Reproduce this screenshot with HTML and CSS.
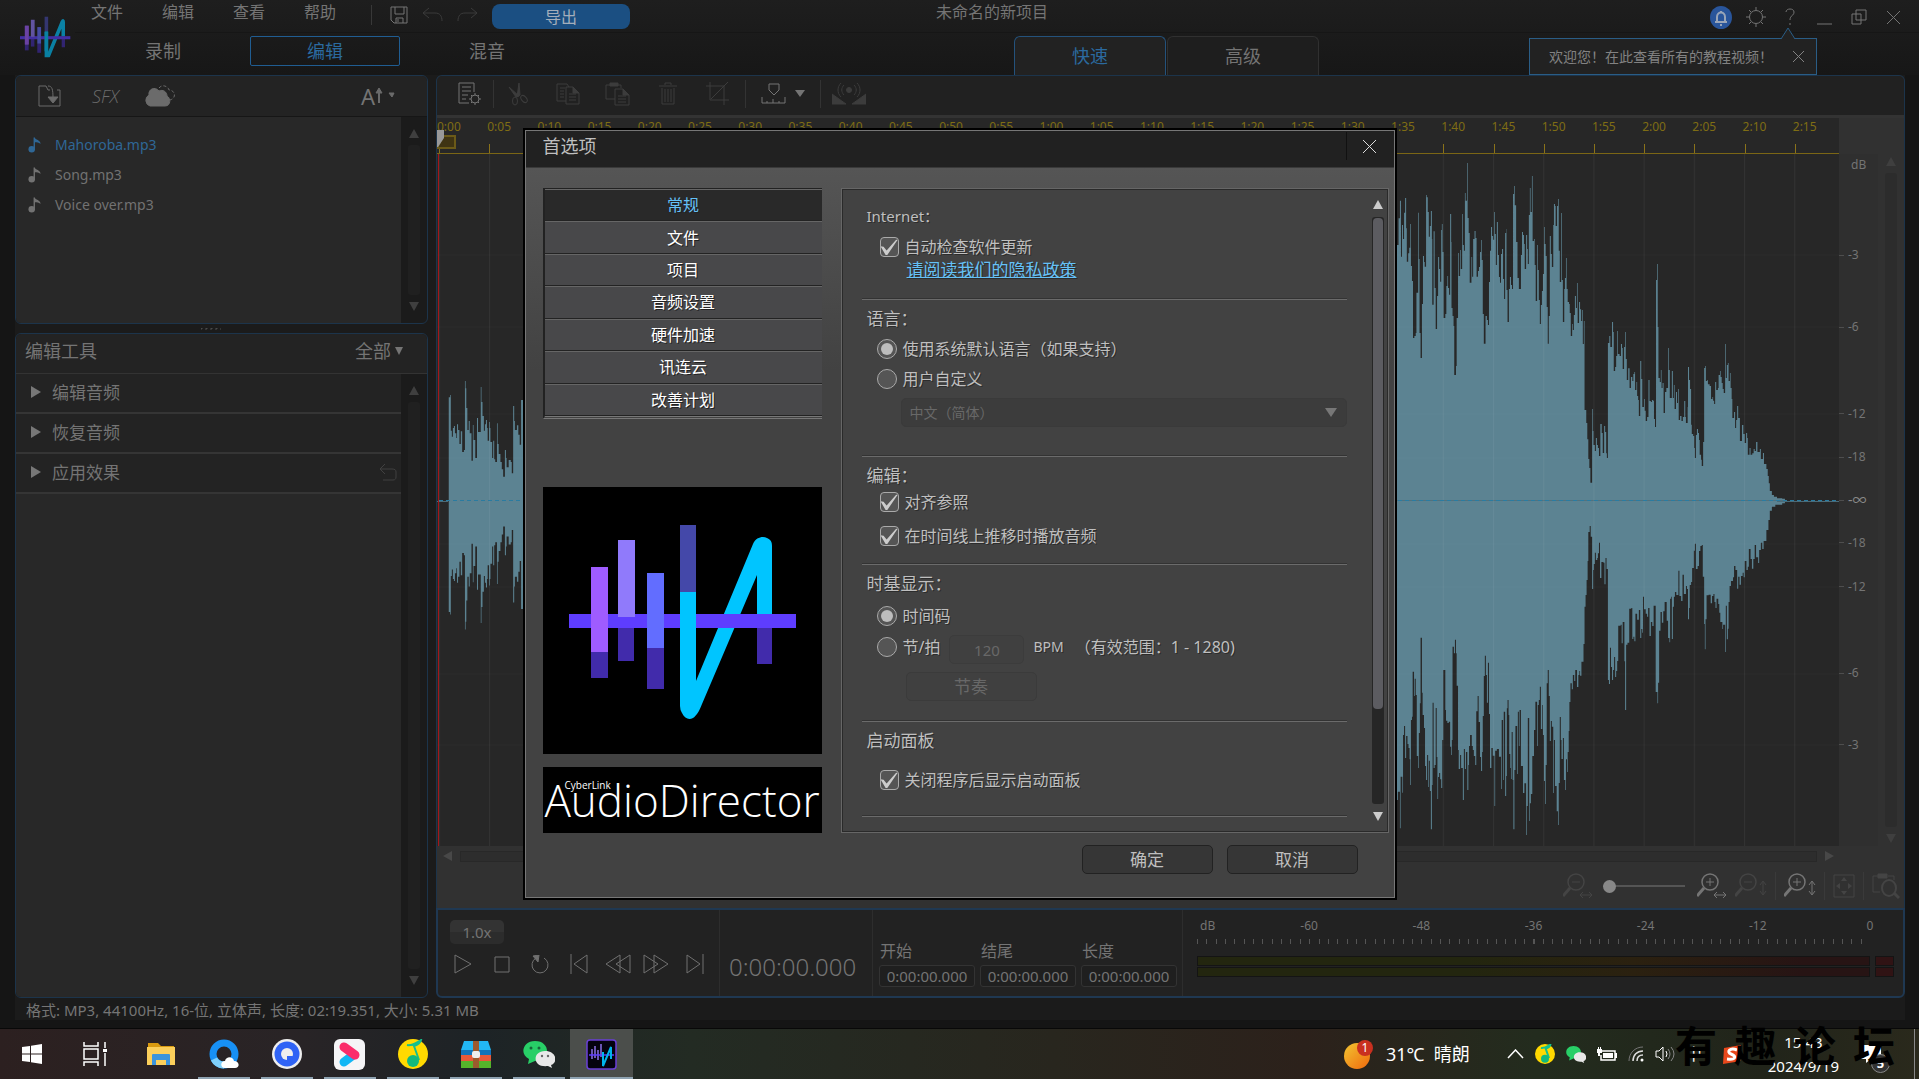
FILE: index.html
```html
<!DOCTYPE html>
<html lang="zh-CN">
<head>
<meta charset="utf-8">
<title>AudioDirector</title>
<link rel="stylesheet" href="styles.css">
</head>
<body>
<svg width="0" height="0" class="defs" aria-hidden="true">
  <symbol id="brand" viewBox="0 0 230 184">
    <rect x="22" y="42" width="17" height="85" fill="#9f5cff"/><rect x="22" y="127" width="17" height="26" fill="#412bab"/>
    <rect x="49" y="102" width="16" height="34" fill="#412bab"/>
    <rect x="78" y="123" width="17" height="41" fill="#412bab"/>
    <rect x="188" y="102" width="15" height="37" fill="#412bab"/>
    <rect x="111" y="0" width="16" height="68" fill="#4448a9"/>
    <path d="M119 70V185C119 190 123 188 126 183L191 24C194 18 195 18 195 26V90" fill="none" stroke="#00c5ff" stroke-width="16" stroke-linejoin="round"/>
    <rect x="0" y="89" width="227" height="14" fill="#5e3dff"/>
    <rect x="22" y="42" width="17" height="85" fill="#9f5cff"/>
    <rect x="49" y="15" width="17" height="77" fill="#907afb"/>
    <rect x="78" y="48" width="17" height="75" fill="#626dff"/>
    <rect x="111" y="67" width="16" height="90" fill="#00c5ff"/>
  </symbol>
  <symbol id="note" viewBox="0 0 14 16"><circle cx="4" cy="12.500" r="3.500"/><path d="M6 0h1.500c0 3 6 2 6 7-2-2-4-2-6-2v8H6z"/></symbol>
  <symbol id="zoomer" viewBox="0 0 22 26"><circle cx="13" cy="9" r="8" fill="none" stroke="currentColor" stroke-width="1.500"/><path d="M7 15 0 23" stroke="currentColor" stroke-width="3"/></symbol>
</svg>

<div class="app">
  <header class="header">
    <svg class="mini-brand" viewBox="0 0 230 190"><use href="#brand" width="230" height="184"/></svg>
    <div class="titlebar">
      <nav class="menu">
        <a href="#">文件</a><a href="#">编辑</a><a href="#">查看</a><a href="#">帮助</a>
      </nav>
      <div class="quick">
        <button aria-label="保存"><svg width="18" height="18" viewBox="0 0 18 18"><path d="M1 1h16v16H4l-3-3zM5 1v7h9V1M6 17v-5h7v5M8 13v3" /></svg></button>
        <button aria-label="撤销" class="off"><svg width="21" height="16" viewBox="0 0 21 16"><path d="M7 1 1 6l6 5M1 6h12c5 0 7 3 7 8"/></svg></button>
        <button aria-label="重做" class="off"><svg width="21" height="16" viewBox="0 0 21 16"><path d="m14 1 6 5-6 5M20 6H8C3 6 1 9 1 14"/></svg></button>
      </div>
      <button class="export">导出</button>
      <h1 class="project">未命名的新项目</h1>
      <div class="window-tools">
        <button aria-label="通知" class="bell"><svg width="22" height="23" viewBox="0 0 22 23"><ellipse cx="11" cy="11.500" rx="11" ry="11.500" fill="#29559b" stroke="none"/><path d="M5 16h12M7 16v-5c0-6 8-6 8 0v5M11 5v2M10 19h2" stroke="#99a5b8" stroke-width="2"/></svg></button>
        <button aria-label="设置"><svg width="20" height="20" viewBox="0 0 20 20"><circle cx="10" cy="10" r="6.500"/><path d="M10 0v3M10 17v3M0 10h3M17 10h3M3 3l2 2M15 15l2 2M3 17l2-2M15 5l2-2"/></svg></button>
        <button aria-label="帮助"><svg width="10" height="18" viewBox="0 0 10 18"><path d="M1 4c0-4 8-4 8 0 0 4-4 3-4 8M5 15v2"/></svg></button>
        <button aria-label="最小化"><svg width="15" height="18" viewBox="0 0 15 18"><path d="M0 16h15"/></svg></button>
        <button aria-label="还原"><svg width="16" height="16" viewBox="0 0 16 16"><path d="M1 5h9v10H1zM5 5V1h10v10h-5M5 5v6h5"/></svg></button>
        <button aria-label="关闭"><svg width="15" height="15" viewBox="0 0 15 15"><path d="m1 1 13 13M14 1 1 14"/></svg></button>
      </div>
    </div>
    <div class="modes">
      <button>录制</button><button class="on">编辑</button><button>混音</button>
      <div class="views"><button class="on">快速</button><button>高级</button></div>
      <aside class="tip">
        <svg class="tip-point" width="14" height="12" viewBox="0 0 14 12"><path d="M0 12 7 1l7 11"/></svg>
        欢迎您！在此查看所有的教程视频！
        <button aria-label="关闭提示"><svg width="11" height="11" viewBox="0 0 11 11"><path d="m0 0 11 11M11 0 0 11"/></svg></button>
      </aside>
    </div>
  </header>

  <main class="workspace">
    <div class="side">
      <section class="panel files">
        <div class="panel-head tools">
          <button aria-label="导入"><svg width="23" height="24" viewBox="0 0 23 24"><path d="M12 6h-2L8 2H1v20h21V6h-3M10 2c4 0 5 3 5 12"/><path d="m10 13 5 6 5-6z" fill="currentColor"/></svg></button>
          <button class="sfx">SFX</button>
          <button aria-label="云"><svg width="33" height="22" viewBox="0 0 33 22"><path d="M6 21a6 6 0 0 1-1-11C4 4 11 1 15 6c4-2 8 1 8 5 4 2 4 10-2 10z" fill="currentColor"/><path d="M15 3c3-4 9-2 10 2 6 0 8 8 1 10" stroke-dasharray="3 2"/></svg></button>
          <button class="sorter" aria-label="排序">A<svg width="22" height="18" viewBox="0 0 22 18"><path d="M4 16V4" stroke-width="2"/><path d="m1 6 3-5 3 5zM14 6h5l-2 4z" fill="currentColor"/></svg></button>
        </div>
        <div class="panel-body">
          <ul class="file-list">
            <li class="on"><svg><use href="#note"/></svg>Mahoroba.mp3</li>
            <li><svg><use href="#note"/></svg>Song.mp3</li>
            <li><svg><use href="#note"/></svg>Voice over.mp3</li>
          </ul>
          <div class="scroll"><i class="up"></i><i class="track"></i><i class="down"></i></div>
        </div>
      </section>
      <div class="grip"></div>
      <section class="panel toolset">
        <div class="panel-head"><h2>编辑工具</h2><button class="filter">全部<i class="down"></i></button></div>
        <div class="panel-body">
          <div class="groups">
            <button><i class="right"></i>编辑音频</button>
            <button><i class="right"></i>恢复音频</button>
            <button><i class="right"></i>应用效果<svg width="18" height="18" viewBox="0 0 18 18"><path d="M6 1 1 6l5 5M1 6h12c3 0 4 1 4 3v5c0 2-1 3-3 3H4"/></svg></button>
          </div>
          <div class="scroll"><i class="up"></i><i class="track"></i><i class="down"></i></div>
        </div>
      </section>
    </div>

    <div class="stage">
      <section class="editor">
        <div class="toolbar">
          <button aria-label="属性" class="lit"><svg width="24" height="24" viewBox="0 0 24 24"><path d="M11 21H1V1h15v9M4 5h9M4 9h9M4 13h6M4 17h4"/><circle cx="17" cy="17" r="4"/><path d="M17 11v2M17 21v2M11 17h2M21 17h2M13 13l1 1M20 20l1 1M13 21l1-1M20 14l1-1"/></svg></button>
          <i class="sep"></i>
          <button aria-label="剪切"><svg width="20" height="24" viewBox="0 0 20 24"><path d="m1 5 10 9-3 1zM11 1l1 12-3 2z" fill="currentColor"/><ellipse cx="7" cy="19" rx="2.500" ry="4"/><ellipse cx="16" cy="17" rx="2.500" ry="4" transform="rotate(-40 16 17)"/></svg></button>
          <button aria-label="复制"><svg width="24" height="24" viewBox="0 0 24 24"><path d="M10 19H1V2h10l2 3M4 6h5M4 9h4M4 12h4M4 15h4M10 5h7l6 6v11H10zM13 12h7M13 15h7M13 18h7"/><path d="M17 5v6h6z" fill="currentColor"/></svg></button>
          <button aria-label="粘贴"><svg width="25" height="24" viewBox="0 0 25 24"><path d="M10 17H1V3h15v3M10 7h8l6 6v10H10zM13 14h8M13 17h8M13 20h8"/><path d="M5 1h8v3H5zM18 7v6h6z" fill="currentColor"/></svg></button>
          <button aria-label="删除"><svg width="18" height="23" viewBox="0 0 18 23"><path d="M0 4h18M6 3V1h6v2M3 6v16h12V6M6 7v13M9 7v13M12 7v13"/></svg></button>
          <button aria-label="裁剪"><svg width="23" height="23" viewBox="0 0 23 23"><path d="M4 0v18h19M0 4h18v19M22 0 5 17"/></svg></button>
          <i class="sep"></i>
          <button aria-label="标记" class="lit marker"><svg width="25" height="22" viewBox="0 0 25 22"><path d="M8 1h10v6l-5 5-5-5zM1 14v6h23v-6M6 18v2M12 16v4M18 18v2"/></svg><i class="down"></i></button>
          <i class="sep"></i>
          <button aria-label="广播"><svg width="34" height="22" viewBox="0 0 34 22"><path d="M0 11v10h14zM34 11v10H20z" fill="currentColor"/><circle cx="17" cy="7" r="2.500" fill="currentColor"/><path d="M12 2c-3 3-3 7 0 10M22 2c3 3 3 7 0 10M9 0c-4 4-4 10 0 14M25 0c4 4 4 10 0 14"/></svg></button>
        </div>
        <div class="timeline">
          <div class="plot">
            <ol class="ruler"></ol>
            <svg class="wave" viewBox="0 0 1402 692" preserveAspectRatio="none">
              <defs><pattern id="cols" x="52" width="50.200" height="692" patternUnits="userSpaceOnUse"><path d="M0 0V692" stroke="#fff" stroke-opacity=".05" stroke-width="2"/></pattern></defs>
              <g fill="#5c8392">
                <path id="lead-top" transform="translate(-437 156) scale(.3444 .3333)"/>
                <path id="lead-bottom" transform="translate(-437 552) scale(.3444 -.3590)"/>
                <path id="tail-top" transform="translate(943 -44) scale(.34375 .3333)"/>
                <path id="tail-bottom" transform="translate(943 336) scale(.34375 .3333)"/>
              </g>
              <rect width="1402" height="692" fill="url(#cols)"/>
              <path d="M0 101H1402M0 173H1402M0 260H1402M0 304H1402M0 390H1402M0 433H1402M0 520H1402M0 591H1402" stroke="#fff" stroke-opacity=".025"/>
              <path d="M0 347.500H11M1340 347.500H1402" stroke="#4a6b78"/>
              <path d="M2 346.500H1402" stroke="#2a7ba0" stroke-dasharray="4 3"/>
              <path d="M1.500 0V692" stroke="#a3161b" stroke-width="1"/>
            </svg>
            <svg class="playhead" width="26" height="20" viewBox="0 0 26 20"><path d="M13 6h12v12H7z" fill="#3f3413" stroke="#6b5a18" stroke-width="2"/><path d="M0 0h14v8l-6 9H7L0 8z" fill="#999"/></svg>
          </div>
          <div class="levels">
            <span class="unit">dB</span>
            <span class="lv" style="top:14.6%">-3</span><span class="lv" style="top:25%">-6</span><span class="lv" style="top:37.5%">-12</span><span class="lv" style="top:43.8%">-18</span><span class="lv inf" style="top:50%">-∞</span><span class="lv" style="top:56.2%">-18</span><span class="lv" style="top:62.5%">-12</span><span class="lv" style="top:75%">-6</span><span class="lv" style="top:85.4%">-3</span>
          </div>
          <div class="scroll"><i class="up"></i><i class="track"></i><i class="down"></i></div>
        </div>
        <div class="hscroll"><i class="left"></i><i class="bar"></i><i class="right"></i></div>
        <div class="zooms">
          <button aria-label="水平缩小"><svg width="30" height="26" viewBox="0 0 30 26"><use href="#zoomer" width="22" height="26"/><path d="M9 9h8M17 22h12m-9-3-3 3 3 3m6-6 3 3-3 3"/></svg></button>
          <input type="range" min="0" max="100" value="0" aria-label="水平缩放">
          <button aria-label="水平放大" class="lit"><svg width="30" height="26" viewBox="0 0 30 26"><use href="#zoomer" width="22" height="26"/><path d="M9 9h8M13 5v8M17 22h12m-9-3-3 3 3 3m6-6 3 3-3 3"/></svg></button>
          <button aria-label="垂直缩小"><svg width="32" height="26" viewBox="0 0 32 26"><use href="#zoomer" width="22" height="26"/><path d="M9 9h8M28 9v12m-3-9 3-4 3 4m-6 6 3 4 3-4"/></svg></button>
          <i class="sep"></i>
          <button aria-label="垂直放大" class="lit"><svg width="32" height="26" viewBox="0 0 32 26"><use href="#zoomer" width="22" height="26"/><path d="M9 9h8M13 5v8M28 9v12m-3-9 3-4 3 4m-6 6 3 4 3-4"/></svg></button>
          <i class="sep"></i>
          <button aria-label="适合窗口"><svg width="22" height="24" viewBox="0 0 22 24"><path d="M1 1h20v22H1z"/><path d="m8 7 3-4 3 4zM8 17l3 4 3-4zM7 9l-4 3 4 3zM15 9l4 3-4 3z" fill="currentColor" stroke="none"/></svg></button>
          <i class="sep"></i>
          <button aria-label="查看选区"><svg width="28" height="26" viewBox="0 0 28 26"><path d="M8 19H1V3h5M16 3h6v4"/><path d="M6 1h9v4H6z" fill="currentColor"/><ellipse cx="17" cy="15" rx="7" ry="8" stroke-width="2"/><path d="m22 20 5 5" stroke-width="3"/></svg></button>
        </div>
      </section>

      <section class="player">
        <div class="transport">
          <button class="speed">1.0x</button>
          <div class="keys">
            <button aria-label="播放"><svg width="18" height="20" viewBox="0 0 18 20"><path d="M1 1v18l16-9z"/></svg></button>
            <button aria-label="停止"><svg width="16" height="17" viewBox="0 0 16 17"><path d="M1 1h14v15H1z"/></svg></button>
            <button aria-label="循环"><svg width="18" height="19" viewBox="0 0 18 19"><path d="M5 3a8 8 0 1 0 8 0"/><path d="m2 1 6-1-1 7z" fill="currentColor"/></svg></button>
            <button aria-label="到开头"><svg width="18" height="20" viewBox="0 0 18 20"><path d="M1 0v20M17 1v18L4 10z"/></svg></button>
            <button aria-label="快退"><svg width="26" height="20" viewBox="0 0 26 20"><path d="M15 1v18L1 10zM25 1v18l-14-9z"/></svg></button>
            <button aria-label="快进"><svg width="26" height="20" viewBox="0 0 26 20"><path d="M1 1v18l14-9zM11 1v18l14-9z"/></svg></button>
            <button aria-label="到结尾"><svg width="18" height="20" viewBox="0 0 18 20"><path d="M17 0v20M1 1v18l13-9z"/></svg></button>
          </div>
        </div>
        <output class="clock">0:00:00.000</output>
        <div class="range">
          <label>开始<input value="0:00:00.000"></label>
          <label>结尾<input value="0:00:00.000"></label>
          <label>长度<input value="0:00:00.000"></label>
        </div>
        <div class="meter">
          <div class="meter-scale"><span>dB</span><span>-60</span><span>-48</span><span>-36</span><span>-24</span><span>-12</span><span>0</span></div>
          <div class="meter-ticks"></div>
          <div class="meter-bars"><i></i><b></b><i></i><b></b></div>
        </div>
      </section>
    </div>
  </main>
  <footer class="status">格式: MP3, 44100Hz, 16-位, 立体声, 长度: 02:19.351, 大小: 5.31 MB</footer>

  <div class="overlay">
    <form class="dialog" role="dialog" aria-labelledby="dlg-title">
      <div class="dialog-title"><h2 id="dlg-title">首选项</h2><button type="button" aria-label="关闭"><svg width="15" height="15" viewBox="0 0 15 15"><path d="m1 1 13 13M14 1 1 14"/></svg></button></div>
      <div class="dialog-body">
        <div class="dialog-side">
          <nav class="pages">
            <button type="button" class="on">常规</button><button type="button">文件</button><button type="button">项目</button><button type="button">音频设置</button><button type="button">硬件加速</button><button type="button">讯连云</button><button type="button">改善计划</button>
          </nav>
          <div class="cover"><svg width="227" height="194" viewBox="0 0 227 194"><g><rect x="22" y="127" width="17" height="26" fill="#412bab"/><rect x="49" y="102" width="16" height="34" fill="#412bab"/><rect x="78" y="123" width="17" height="41" fill="#412bab"/><rect x="188" y="102" width="15" height="37" fill="#412bab"/><rect x="111" y="0" width="16" height="68" fill="#4448a9"/><path d="M111 67h16v89L184 19c3-7 10-8 14-6 4 2 5 4 5 8v69h-15V50L133 179c-3 8-6 12-9 14-4 2-8 1-11-5q-2-3-2-7z" fill="#00c5ff"/><path d="M0 89h227v14H0z" fill="#5e3dff"/><rect x="22" y="42" width="17" height="85" fill="#9f5cff"/><rect x="49" y="15" width="17" height="77" fill="#907afb"/><rect x="78" y="48" width="17" height="75" fill="#626dff"/><rect x="111" y="67" width="16" height="60" fill="#00c5ff"/></g></svg></div>
          <div class="product"><small>CyberLink</small><span>AudioDirector</span></div>
        </div>
        <div class="pane">
          <div class="pane-content">
            <section class="s-net">
              <h3>Internet：</h3>
              <label class="row"><input type="checkbox" checked>自动检查软件更新</label>
              <a href="#">请阅读我们的隐私政策</a>
            </section>
            <section class="s-lang">
              <h3>语言：</h3>
              <label class="row"><input type="radio" name="lang" checked>使用系统默认语言（如果支持）</label>
              <label class="row"><input type="radio" name="lang">用户自定义</label>
              <div class="drop"><select disabled aria-label="语言"><option>中文（简体）</option></select><i class="down"></i></div>
            </section>
            <section class="s-edit">
              <h3>编辑：</h3>
              <label class="row"><input type="checkbox" checked>对齐参照</label>
              <label class="row"><input type="checkbox" checked>在时间线上推移时播放音频</label>
            </section>
            <section class="s-time">
              <h3>时基显示：</h3>
              <label class="row"><input type="radio" name="base" checked>时间码</label>
              <div class="row beat"><label><input type="radio" name="base">节/拍</label><input class="bpm" value="120" disabled aria-label="BPM"><span class="unit">BPM</span><span>（有效范围：1 - 1280)</span></div>
              <button type="button" class="tempo" disabled>节奏</button>
            </section>
            <section class="s-start">
              <h3>启动面板</h3>
              <label class="row"><input type="checkbox" checked>关闭程序后显示启动面板</label>
            </section>
          </div>
          <div class="scroll"><i class="up"></i><i class="track"><b></b></i><i class="down"></i></div>
        </div>
      </div>
      <div class="dialog-foot"><button type="button">确定</button><button type="button">取消</button></div>
    </form>
  </div>
</div>

<footer class="taskbar">
  <button class="task start" aria-label="开始"><svg width="20" height="20" viewBox="0 0 20 20"><path d="m0 3 8-1v7.500H0zM9 1.800 20 0v9.500H9zM0 10.500h8V18l-8-1zM9 10.500h11V20L9 18.200z" fill="#fff"/></svg></button>
  <button class="task view" aria-label="任务视图"><svg width="24" height="24" viewBox="0 0 24 24" fill="none" stroke="#fff" stroke-width="1.500"><path d="M1 0v4h14V0M1 24v-4h14v4M1 7h14v10H1zM22 0v6M22 11v13"/><path d="M20 7h4v3h-4z" fill="#fff" stroke="none"/></svg></button>
  <button class="task" aria-label="文件资源管理器"><svg width="28" height="24" viewBox="0 0 28 24"><path d="M1 1h10l3 3h13v18H1z" fill="#d99a10"/><path d="M0 5h28v18H0z" fill="#fbcf5b"/><path d="M5 23V13q0-1 1-1h16q1 0 1 1v10h-4v-5H9v5z" fill="#3b94dc"/></svg></button>
  <button class="task open" aria-label="QQ浏览器"><svg width="30" height="30" viewBox="0 0 30 30"><circle cx="15" cy="15" r="11" fill="none" stroke="#1790f5" stroke-width="7"/><path d="M5 20a11 11 0 0 0 10 6" fill="none" stroke="#7fd0fb" stroke-width="7"/><path d="M16 29c-5 0-5-7 0-7 1-5 8-5 9 0 6 0 6 7 1 7z" fill="#fff"/></svg></button>
  <button class="task open" aria-label="夸克"><svg width="30" height="30" viewBox="0 0 30 30"><circle cx="15" cy="15" r="15" fill="#eee"/><circle cx="15" cy="15" r="12.500" fill="#2f63f5"/><circle cx="15" cy="15" r="6" fill="#eee"/><path d="M15 17h6l-1 4h-5z" fill="#2f63f5"/></svg></button>
  <button class="task open" aria-label="视频"><svg width="31" height="31" viewBox="0 0 31 31"><rect width="31" height="31" rx="6" fill="#f5f5f7"/><path d="m10 23 8-6" stroke="#12b7f5" stroke-width="9" stroke-linecap="round"/><path d="m10 8 11 8" stroke="#fb2d6b" stroke-width="9" stroke-linecap="round"/></svg></button>
  <button class="task open" aria-label="QQ音乐"><svg width="30" height="30" viewBox="0 0 30 30"><circle cx="15" cy="15" r="15" fill="#ffd900"/><path d="M9 6c5 1 9-2 14-5-1 4-4 5-7 6l5 14" fill="none" stroke="#14bf8d" stroke-width="2"/><path d="M9 6c5 1 9-2 14-5-1 4-4 5-7 6z" fill="#14bf8d"/><ellipse cx="15" cy="22" rx="6" ry="6" fill="#12b97c"/></svg></button>
  <button class="task open" aria-label="压缩"><svg width="30" height="27" viewBox="0 0 30 27"><path d="M3 0h24l3 9H0z" fill="#22b7f3"/><path d="M0 9h30v5H0z" fill="#1273b9"/><path d="M0 14h30v6H0z" fill="#e8593a"/><path d="M0 20h30v7H0z" fill="#55b42b"/><path d="M12 0h6v27h-6z" fill="#9b5a2d"/><rect x="11" y="10" width="8" height="7" rx="2" fill="#eee"/></svg></button>
  <button class="task open" aria-label="微信"><svg width="32" height="27" viewBox="0 0 32 27"><path d="M12 0c16 0 16 20 0 20l-7 3 1-5C-4 13 0 0 12 0z" fill="#28cf67"/><circle cx="8" cy="7" r="1.500" fill="#17663a"/><circle cx="16" cy="7" r="1.500" fill="#17663a"/><path d="M22 10c12 0 13 12 6 14l1 3-4-2c-16 2-16-15-3-15z" fill="#e8e8e8"/><circle cx="19" cy="15" r="1.200" fill="#666"/><circle cx="25" cy="15" r="1.200" fill="#666"/></svg></button>
  <button class="task open active" aria-label="AudioDirector"><svg width="31" height="31" viewBox="0 0 31 31"><rect x="1" y="1" width="29" height="29" rx="3" fill="#05030f" stroke="#6a3fd8" stroke-width="1.500"/><path d="M6 10v10M9 7v12M12 11v10M15 5v13" stroke="#8b70e8" stroke-width="1.500"/><path d="M3 16h25" stroke="#5e3dff" stroke-width="1.500"/><path d="M17 13v14l8-19v12" fill="none" stroke="#00b5ec" stroke-width="2"/></svg></button>

  <div class="tray">
    <svg class="weather" width="31" height="31" viewBox="0 0 31 31"><defs><linearGradient id="sun" x2="1" y2="1"><stop stop-color="#f2c531"/><stop offset="1" stop-color="#f0680d"/></linearGradient></defs><circle cx="13" cy="17" r="13" fill="url(#sun)"/><circle cx="21" cy="9" r="8" fill="#c9301f"/><text x="21" y="13" text-anchor="middle">1</text></svg>
    <span class="temp">31℃&nbsp; 晴朗</span>
    <svg class="chev" width="17" height="10" viewBox="0 0 17 10" fill="none" stroke="#fff" stroke-width="1.500"><path d="m1 9 7.500-8L16 9"/></svg>
    <svg width="20" height="20" viewBox="0 0 30 30"><circle cx="15" cy="15" r="15" fill="#ffd900"/><path d="M9 6c5 1 9-2 14-5-1 4-4 5-7 6l5 14" fill="none" stroke="#14bf8d" stroke-width="3"/><circle cx="15" cy="22" r="6" fill="#12b97c"/></svg>
    <svg width="20" height="17" viewBox="0 0 32 27"><path d="M12 0c16 0 16 20 0 20l-7 3 1-5C-4 13 0 0 12 0z" fill="#28cf67"/><path d="M22 10c12 0 13 12 6 14l1 3-4-2c-16 2-16-15-3-15z" fill="#e8e8e8"/></svg>
    <svg width="20" height="14" viewBox="0 0 20 14"><path d="M4 4h14v9H4V8" fill="none" stroke="#fff" stroke-width="1.500"/><path d="M6 6h10v5H6zM0 2h5v4H3v3H1V6H0zM1 0h1v2H1zM3 0h1v2H3zM18 6h2v5h-2z" fill="#fff"/></svg>
    <svg width="16" height="16" viewBox="0 0 16 16" fill="none"><path d="M1 15C1 7 7 1 15 1" stroke="#777"/><path d="M5 15C5 9 9 5 15 5M9 15c0-4 2-6 6-6" stroke="#ddd" stroke-width="1.500"/><circle cx="14" cy="14" r="1.500" fill="#fff"/></svg>
    <svg width="20" height="16" viewBox="0 0 20 16" fill="none" stroke="#fff"><path d="M1 5h3l4-4v14l-4-4H1zM11 5q2 3 0 6"/><path d="M13 3q4 5 0 10M16 1q6 7 0 14" stroke="#888"/></svg>
    <span class="ime">中</span>
    <svg class="sogou" width="19" height="19" viewBox="0 0 19 19"><path d="M2 3 19 0v16L1 19z" fill="#e8481c"/><path d="M15 5C8 2 4 7 9 9s6 6-4 5" fill="none" stroke="#fff" stroke-width="3"/></svg>
    <time class="when">15:43<br>2024/9/19</time>
    <span class="notes"><svg width="20" height="18" viewBox="0 0 20 18"><path d="M0 0h20v14H10l-5 4v-4H0z" fill="#fff"/></svg><em>5</em></span>
    <i class="peek"></i>
  </div>
  <div class="watermark"><span>有</span><span>趣</span><span>论</span><span>坛</span></div>
</footer>
<script src="wave.js"></script>
</body>
</html>
```
FILE: wave.js
```js
// Ruler labels, one every five seconds.
const ruler = document.querySelector('.ruler');
for (let s = 0; s <= 135; s += 5) {
  const li = document.createElement('li');
  li.textContent = Math.floor(s / 60) + ':' + String(s % 60).padStart(2, '0');
  ruler.append(li);
}

// Peak envelopes as "x,level" pairs; each level holds until the next x.
function envelope(id, base, data) {
  const pts = data.trim().split(/\s+/).map(p => p.split(','));
  let d = 'M' + pts[0][0] + ' ' + base;
  for (const [x, y] of pts) d += 'H' + x + 'V' + y;
  document.getElementById(id).setAttribute('d', d + 'V' + base + 'Z');
}

const lead = `1303,262 1307,255 1309,362 1312,380 1315,354 1318,348 1321,370 1325,384 1327,343 1330,360 1334,402 1338,364 1342,426 1347,420 1350,213 1352,235 1354,294 1357,360 1361,333 1364,370 1369,452 1373,345 1375,390 1380,444 1385,324 1388,366 1396,231 1398,276 1401,318 1405,362 1408,343 1411,330 1414,354 1416,392 1420,336 1422,354 1424,396 1429,444 1432,392 1435,448 1438,456 1443,340 1445,402 1448,432 1453,456 1457,478 1461,500 1466,420 1469,444 1471,472 1477,450 1483,456 1486,490 1490,288 1493,333 1495,360 1501,346 1505,374 1509,404 1513,270 1530,270`;
envelope('lead-top', 573, lead);
envelope('lead-bottom', 573, lead);

envelope('tail-top', 1172, `40,405 54,325 58,272 61,440 64,345 67,387 70,308 73,264 76,355 78,455 82,430 85,413 88,342 90,468 93,513 96,684 100,678 104,669 106,548 111,308 113,447 115,669 118,744 122,582 125,438 128,456 130,470 134,255 136,262 139,306 142,380 145,348 148,303 151,387 152,584 156,364 159,534 162,657 166,558 169,441 172,477 175,515 178,360 180,342 182,426 185,624 190,612 193,528 196,498 198,534 201,554 204,312 207,396 208,594 211,618 214,648 216,795 221,768 223,624 227,429 229,498 233,420 235,477 239,312 241,405 244,422 247,249 249,272 253,159 255,324 258,369 261,518 266,441 268,500 271,387 275,363 278,384 281,500 285,483 288,471 291,426 294,390 296,450 299,612 302,701 307,618 311,630 314,645 317,516 320,422 323,351 326,378 329,389 332,306 334,372 337,465 340,336 343,435 346,501 349,518 352,432 355,417 358,507 361,567 364,369 367,357 368,540 371,636 375,537 378,501 381,525 384,537 387,252 390,228 392,286 396,396 400,504 404,537 410,435 413,366 416,375 419,402 421,477 425,375 428,417 430,462 433,315 436,234 438,306 442,198 444,393 448,387 450,465 453,573 457,405 459,480 462,570 465,642 468,585 471,543 474,492 477,351 479,402 482,438 485,591 488,701 491,618 494,378 497,432 500,471 504,345 506,282 509,288 511,348 515,288 518,267 520,422 523,516 527,309 529,510 532,636 536,537 538,504 541,444 543,537 546,576 550,582 552,609 555,678 559,642 561,660 564,615 567,558 570,594 573,519 575,639 579,576 582,598 585,633 588,600 590,702 593,633 595,900 600,939 603,988 606,1047 609,1074 612,1118 617,897 619,963 621,1005 625,1023 628,984 631,1005 634,1014 637,1038 641,942 645,969 648,1029 652,948 655,966 658,1030 660,1044 663,699 667,678 670,711 675,636 678,666 680,783 684,771 687,738 690,663 692,732 697,738 701,702 704,714 706,777 710,711 713,666 715,747 718,810 722,775 726,834 730,801 734,813 737,792 740,786 742,840 746,816 748,858 751,870 753,918 757,753 760,807 763,891 768,867 770,902 773,933 777,921 781,810 784,873 788,876 791,870 795,873 797,927 800,951 803,510 806,462 808,651 810,804 814,816 817,780 819,834 822,819 825,909 829,846 833,834 838,714 840,780 843,864 849,783 852,864 855,825 857,897 861,846 864,879 867,837 869,930 873,918 877,933 881,921 885,873 888,921 890,939 895,891 896,771 899,810 902,837 905,944 907,972 911,978 914,1014 916,1044 919,975 922,957 925,969 928,990 930,1034 934,1049 936,1068 940,996 943,774 946,768 948,813 952,810 954,823 959,828 963,867 967,861 969,872 972,882 975,816 978,840 983,834 985,795 989,783 991,801 994,819 997,837 1000,849 1004,702 1006,804 1009,765 1012,759 1014,813 1018,789 1020,834 1023,867 1025,924 1030,906 1033,954 1036,930 1039,888 1042,924 1047,993 1053,945 1057,972 1061,999 1065,969 1068,984 1070,1034 1075,1014 1078,1034 1083,1030 1087,1017 1090,1023 1094,996 1098,1026 1105,1017 1108,1047 1114,1029 1117,1062 1124,1077 1128,1098 1131,1120 1134,1143 1140,1155 1146,1160 1155,1165 1170,1166 1178,1172`);

envelope('tail-bottom', 32, `40,930 52,905 58,1015 60,860 65,908 67,735 70,708 73,804 76,738 80,762 83,774 86,808 88,885 90,690 93,680 95,545 99,618 101,566 104,615 107,798 111,834 113,729 116,640 118,443 122,608 124,675 128,714 131,828 134,870 137,795 140,891 142,812 145,903 148,1018 151,885 153,638 156,834 159,825 162,654 165,801 167,927 169,861 172,849 175,868 178,894 181,750 184,540 190,660 192,692 196,699 200,695 204,770 207,795 209,750 211,470 215,490 218,449 221,490 223,587 227,780 229,837 233,795 236,834 241,930 244,777 247,837 250,786 254,900 257,825 259,768 262,735 267,768 270,780 273,798 277,825 280,664 284,618 287,696 291,801 294,843 297,786 299,678 302,558 305,497 308,555 311,638 314,518 317,672 320,834 324,774 328,797 333,948 335,782 340,777 346,800 352,897 354,690 358,870 360,665 364,918 367,858 369,655 371,630 374,675 376,792 379,834 381,867 383,726 386,870 388,1018 391,840 394,708 399,852 401,665 404,768 406,660 410,828 416,909 420,880 425,1035 427,948 430,684 434,993 436,940 439,912 443,798 448,720 452,635 457,768 459,645 462,630 465,590 468,717 472,645 474,735 477,873 480,942 482,825 485,580 488,540 491,618 494,753 497,693 500,710 504,909 506,750 509,888 514,964 518,1005 520,879 523,681 526,750 528,807 532,744 535,870 539,900 541,808 544,846 546,786 549,723 551,636 554,580 558,598 561,555 565,573 568,540 573,591 577,555 580,543 582,557 586,515 592,462 595,350 598,315 601,270 604,213 606,126 610,108 613,140 617,297 620,240 622,222 625,188 628,210 632,204 634,190 637,158 640,264 644,216 650,218 653,283 656,204 659,237 663,570 666,582 669,473 672,531 675,570 678,540 681,501 684,561 687,543 690,513 693,407 700,404 703,460 706,396 711,514 713,660 716,464 720,458 725,356 731,354 734,447 737,440 740,454 743,371 748,389 753,360 757,444 760,417 763,428 765,320 768,358 773,371 777,380 780,354 784,438 788,396 792,408 796,347 802,606 807,640 809,578 812,422 816,366 820,398 824,364 828,336 834,392 838,444 842,457 844,326 847,320 849,447 852,350 855,320 858,306 862,315 868,242 871,318 876,333 880,254 884,312 890,288 893,297 896,388 899,354 901,285 905,276 908,234 913,182 916,161 919,237 924,228 928,183 932,168 936,165 939,260 943,402 945,478 947,388 950,316 956,314 962,340 966,318 970,312 973,336 976,354 979,326 984,342 987,368 990,396 996,417 998,404 1004,486 1006,347 1009,448 1012,416 1014,336 1017,288 1021,273 1027,262 1030,228 1034,240 1039,296 1042,260 1046,284 1050,258 1055,248 1058,262 1061,213 1066,240 1070,230 1073,177 1078,207 1082,236 1086,207 1090,165 1094,202 1100,219 1103,180 1108,158 1112,177 1116,153 1124,120 1130,90 1134,62 1140,50 1150,44 1170,40 1178,32`);
```
FILE: styles.css
```css
* { box-sizing: border-box; margin: 0; padding: 0; }
body {
  display: flex; flex-direction: column; height: 100vh; overflow: hidden;
  background: #151515; color: #747474;
  font: 16px/1 "Noto Sans", "Noto Sans CJK SC", sans-serif;
}
h1, h2, h3 { font-weight: inherit; font-size: inherit; }
ul, ol { list-style: none; }
a { color: inherit; text-decoration: none; }
button, input, select { font: inherit; color: inherit; background: none; border: 0; outline: 0; }
button { display: flex; align-items: center; justify-content: center; white-space: nowrap; }
svg { display: block; flex: none; }
button svg, .tip svg { fill: none; stroke: currentColor; }
.defs { position: absolute; }
i { display: block; flex: none; }

.up, .down, .left, .right { width: 0; height: 0; border: 5px solid transparent; }
.up { border-top: 0; border-bottom: 9px solid #3f3f3f; }
.down { border-bottom: 0; border-top: 9px solid #3f3f3f; }
.left { border-left: 0; border-right: 9px solid #484848; }
.right { border-right: 0; border-left: 9px solid #484848; }

.app { position: relative; flex: 1; min-height: 0; display: flex; flex-direction: column; padding: 0 14px 8px 15px; background: #151515; }

/* header */
.header { display: grid; grid-template-columns: 60px 1fr; margin: 0 -14px 0 -15px; padding-left: 15px; background: linear-gradient(#1e1e1e, #171717); }
.mini-brand { width: 51px; height: 45px; margin: 15px 0 0 5px; grid-row: 1 / 3; opacity: .6; }
.titlebar { position: relative; display: flex; height: 33px; padding: 0 14px 0 16px; border-bottom: 1px solid #161616; }
.menu { display: flex; gap: 39px; padding-top: 4px; }
.menu a { line-height: 16px; }
.quick { display: flex; gap: 14px; height: 20px; margin: 5px 14px 0 35px; padding-left: 18px; border-left: 1px solid #383838; }
.off { color: #3b3b3b; }
.export { width: 138px; height: 25px; margin-top: 4px; border-radius: 8px; background: #1b4f82; color: #a3aebb; }
.project { position: absolute; inset: 0 210px 0 200px; padding-top: 4px; text-align: center; pointer-events: none; }
.window-tools { display: flex; align-items: center; justify-content: space-between; width: 195px; height: 34px; margin-left: auto; }
.window-tools button { width: 22px; }
.modes { position: relative; display: flex; align-items: flex-end; height: 42px; padding-left: 7px; font-size: 18px; }
.modes > button { width: 150px; height: 30px; margin: 0 6px 9px; border: 1px solid transparent; border-radius: 2px; }
.modes > .on { border-color: #205d92; color: #2b6a9f; }
.views { display: flex; height: 39px; margin-left: 446px; gap: 1px; }
.views button { width: 152px; border: 1px solid #303030; border-bottom: 0; border-radius: 6px 6px 0 0; background: #1e1e1e; }
.views .on { border-color: #24527c; background: #222; color: #2b6a9f; }
.tip { position: absolute; right: 102px; bottom: 0; display: flex; align-items: center; justify-content: space-between; width: 288px; height: 37px; padding: 0 12px 0 19px; border: 1px solid #2a5d86; background: #222; font-size: 14px; white-space: nowrap; color: #828282; }
.tip-point { position: absolute; right: 21px; top: -12px; width: 14px; }
.tip .tip-point path { fill: #222; stroke: #2a5d86; }

/* panels */
.workspace { flex: 1; min-height: 0; display: grid; grid-template-columns: 413px 1fr; gap: 8px; background: #1b1b1b; }
.side, .stage { display: flex; flex-direction: column; min-width: 0; min-height: 0; }
.panel { display: flex; flex-direction: column; border: 1px solid #1c344b; border-radius: 6px; background: #1b1b1b; overflow: hidden; }
.files { height: 249px; }
.toolset { flex: 1; }
.panel-head { display: flex; align-items: center; height: 41px; background: #232323; border-bottom: 1px solid #161616; font-size: 18px; }
.toolset .panel-head { height: 40px; padding: 0 24px 5px 9px; justify-content: space-between; border-bottom-color: #333; }
.filter { gap: 4px; }
.filter .down { border-top-color: #747474; border-width: 8px 4px 0; }
.panel-body { flex: 1; display: flex; justify-content: space-between; min-height: 0; }
.file-list, .groups { flex: 1; background: #282828; }
.scroll { display: flex; flex-direction: column; align-items: center; gap: 7px; width: 26px; padding: 12px 0; }
.track { flex: 1; width: 12px; border-radius: 3px; background: #202020; }
.tools { padding: 0 30px 0 22px; }
.tools button:nth-child(2) { margin: 0 25px 0 31px; }
.tools .sfx { font-size: 18px; font-style: italic; font-family: "Open Sans", sans-serif; font-weight: 300; }
.tools .sorter { margin-left: auto; font-size: 22px; }
.tools svg, .sfx { color: #6b6b6b; }
.file-list { padding: 13px 0 0 12px; font-size: 14px; }
.file-list li { display: flex; align-items: center; gap: 14px; height: 30px; color: #727272; }
.file-list svg { width: 13px; height: 16px; fill: #727272; }
.file-list .on { color: #2f6796; }
.file-list .on svg { fill: #2f6796; }
.grip { height: 9px; background: radial-gradient(circle, #4a4a4a 1px, transparent 1px) center / 5px 5px repeat-x; width: 20px; margin: 0 auto 0 186px; }
.groups button { position: relative; width: 100%; height: 40px; padding: 0 4px 2px 15px; gap: 11px; justify-content: flex-start; background: #232323; border-bottom: 2px solid #353535; font-size: 17px; }
.groups .right { border-width: 6px 0 6px 10px; border-left-color: #777; }
.groups svg { margin-left: auto; color: #414141; }

/* editor */
.editor { flex: 1; min-height: 0; display: flex; flex-direction: column; background: #313131; border: 1px solid #1c344b; border-width: 1px 1px 0; border-radius: 6px 6px 0 0; overflow: hidden; }
.toolbar { display: flex; align-items: center; height: 42px; padding: 0 0 4px 20px; background: #212121; border-bottom: 3px solid #333; color: #3c3c3c; gap: 11px; }
.toolbar button { min-width: 25px; }
.toolbar button + button { margin-left: 14px; }
.toolbar .sep ~ .sep, .toolbar .marker { margin-left: 4px; }
.toolbar .lit, .zooms .lit { color: #757575; }
.sep { width: 1px; height: 28px; background: #333; }
.zooms .sep { background: #3a3a3a; }
.marker { gap: 9px; }
.marker .down { border-top-color: #747474; border-width: 7px 5px 0; }
.timeline { flex: 1; min-height: 0; display: grid; grid-template-columns: 1fr 39px 26px; }
.plot { position: relative; display: flex; flex-direction: column; min-width: 0; min-height: 0; overflow: hidden; background: #272727; }
.ruler { display: grid; grid-template-columns: repeat(28, minmax(0, 1fr)); height: 36px; margin-right: -6px; padding-left: 2px; border-bottom: 1px solid #7b6615; font-size: 12px; color: #7f6d14; }
.ruler li { position: relative; padding-top: 3px; margin-left: -2px; }
.ruler li::after { content: ""; position: absolute; left: 2px; bottom: 0; width: 1px; height: 9px; background: #8a721a; }
.wave { flex: 1; width: 100%; min-height: 0; }
.playhead { position: absolute; left: -7px; top: 12px; }
.levels { position: relative; margin-top: 36px; font-size: 12px; background: #2f2f2f; }
.levels .unit { position: absolute; left: 12px; top: 5px; }
.lv { position: absolute; left: 0; display: flex; align-items: center; gap: 4px; height: 12px; margin-top: -6px; }
.lv::before { content: ""; width: 5px; height: 1px; background: #4e4e4e; }
.inf { font-size: 14px; color: #8a8a8a; }
.timeline .scroll { margin-top: 36px; padding: 3px 0; }
.timeline .track { background: #2c2c2c; }
.hscroll { display: flex; align-items: center; gap: 8px; height: 20px; padding: 0 70px 0 6px; }
.hscroll .bar { flex: 1; height: 11px; background: #2d2d2d; border: 1px solid #282828; }
.zooms { display: flex; align-items: center; justify-content: flex-end; gap: 8px; height: 42px; padding: 0 4px 2px 0; color: #444; }
.zooms input { width: 82px; height: 16px; margin: 0 4px 0 2px; appearance: none; background: linear-gradient(#555, #555) center / 100% 2px no-repeat; }
.zooms input::-webkit-slider-thumb { appearance: none; width: 13px; height: 13px; border-radius: 50%; background: #888; }

/* player */
.player { display: flex; height: 90px; background: #222; border: 2px solid #1f3852; border-radius: 0 0 6px 6px; }
.transport { width: 282px; padding: 10px 11px 0 12px; border-right: 1px solid #2d2d2d; }
.speed { width: 54px; height: 24px; border-radius: 5px; background: linear-gradient(#333 50%, #2c2c2c 50%); font-size: 15px; }
.keys { display: flex; align-items: center; justify-content: space-between; height: 40px; color: #707070; }
.keys button { width: 26px; }
.clock { width: 153px; padding: 45px 0 0 9px; font-size: 24px; font-weight: 300; border-right: 1px solid #2d2d2d; white-space: nowrap; }
.range { display: flex; gap: 5px; padding: 33px 5px 0 6px; border-right: 1px solid #2d2d2d; }
.range label { width: 96px; text-indent: 1px; }
.range input { display: block; width: 100%; height: 22px; margin-top: 6px; border: 1px solid #333; border-radius: 3px; background: #1f1f1f; font-size: 15px; text-align: center; }
.meter { flex: 1; min-width: 0; padding: 10px 9px 0 14px; font-size: 12px; }
.meter-scale { display: flex; justify-content: space-between; margin-right: 24px; }
.meter-scale span { display: flex; justify-content: center; width: 0; white-space: nowrap; }
.meter-scale span:first-child { justify-content: flex-start; text-indent: 3px; }
.meter-ticks { height: 5px; margin: 7px 24px 12px 0; background: repeating-linear-gradient(to right, #555 0 1px, transparent 1px calc(100% / 72)); }
.meter-bars { display: grid; grid-template-columns: 1fr 19px; gap: 1px 5px; }
.meter-bars i, .meter-bars b { height: 10px; border: 1px solid #141414; }
.meter-bars i { background: linear-gradient(90deg, #23260f 40%, #2b2110 65%, #271414 90%); }
.meter-bars b { background: #301314; }
.status { height: 22px; padding: 5px 11px; background: #1b1b1b; font-size: 15px; color: #757575; }

/* preferences dialog */
.overlay { position: absolute; inset: 0; display: grid; place-items: center; }
.dialog { width: 874px; border: 2px solid #000; box-shadow: inset 0 0 0 1px #777; padding: 1px; background: linear-gradient(#555 38px, #424242 240px); color: #bfbfbf; }
.dialog-title { display: flex; align-items: center; justify-content: space-between; height: 37px; padding: 0 17px 6px; background: #212121; border-bottom: 1px solid #3a3a3a; font-size: 18px; }
.dialog-title button { padding-left: 15px; height: 28px; border-left: 1px solid #111; color: #ddd; }
.dialog-body { display: grid; grid-template-columns: 279px 1fr; gap: 19px; padding: 20px 5px 0 17px; }
.dialog-side { display: flex; flex-direction: column; gap: 13px; }
.pages { display: grid; grid-template-rows: repeat(7, 1fr); height: 231px; margin-bottom: auto; border: 1px solid #222; border-width: 1px 0 1px 2px; border-bottom: 3px double #777; }
.pages button { color: #fff; background: #48484a; border-top: 1px solid #666; border-bottom: 1px solid #232323; text-shadow: 1px 1px #222; }
.pages .on { background: #292929; color: #65c1f6; }
.cover { display: flex; justify-content: center; height: 267px; padding-top: 38px; background: #000; }
.product { position: relative; display: grid; place-items: center; height: 66px; background: #000; color: #fff; font-family: "Open Sans", sans-serif; font-weight: 300; font-size: 44px; }
.product small { position: absolute; left: 22px; top: 13px; font-size: 10px; font-weight: 400; }
.pane { display: flex; justify-content: space-between; height: 645px; padding: 1px 3px 0 20px; border: 1px solid #666; box-shadow: inset 0 0 0 1px #2a2a2a; background: #424242; }
.pane-content { width: 485px; text-shadow: 1px 1px #2c2c2c; }
.pane section { border-bottom: 1px solid #6b6b6b; box-shadow: 0 -1px #333 inset; }
.pane h3 { height: 22px; padding-left: 5px; font-size: 17px; line-height: 22px; }
.row { display: flex; align-items: center; gap: 6px; height: 30px; padding-left: 15px; }
.row:has([type=checkbox]) { padding-left: 18px; gap: 6px; }
.s-net { padding: 15px 0 18px; }
.s-net h3 { margin-bottom: 8px; font-size: 15px; }
.s-net .row { height: 24px; }
.s-net a { display: block; margin-left: 45px; font-size: 17px; line-height: 22px; color: #65c1f6; text-decoration: underline; }
.s-lang { padding: 8px 0 29px; }
.s-lang h3 { margin-bottom: 4px; }
.s-edit { padding: 8px 0 13px; }
.s-edit .row + .row { margin-top: 4px; }
.s-time { padding: 8px 0 20px; }
.s-time h3 { margin-bottom: 6px; }
.s-start { padding: 8px 0 21px; }
.s-start h3 { margin-bottom: 13px; }
.row input[type=checkbox], .row input[type=radio] { appearance: none; flex: none; display: grid; place-items: center; width: 20px; height: 20px; border: 1px solid #aaa; background: #555; }
.row input[type=checkbox] { width: 19px; border-radius: 4px; }
.row input[type=radio] { border-radius: 50%; }
.row input[type=checkbox]:checked::after { content: ""; width: 17px; height: 16px; background: #ccc; clip-path: polygon(0 45%, 18% 48%, 36% 72%, 92% 4%, 100% 6%, 40% 100%, 30% 100%); }
.row input[type=radio]:checked::after { content: ""; width: 12px; height: 12px; border-radius: 50%; background: #bdbdbd; }
.drop { position: relative; margin: 4px 0 0 39px; }
.drop select { display: block; appearance: none; width: 100%; height: 29px; padding-left: 8px; border: 1px solid #3a3a3a; border-radius: 5px; background: #3c3c3c; color: #686868; font-size: 14px; opacity: 1; }
.drop .down { position: absolute; right: 10px; top: 10px; border-width: 9px 6px 0; }
.beat { height: 32px; gap: 9px; white-space: nowrap; }
.beat label { display: flex; align-items: center; gap: 6px; }
.bpm { width: 75px; height: 29px; margin-top: 5px; border: 1px solid #3c3c3c; border-radius: 5px; background: #404040; color: #686868; font-size: 15px; text-align: center; }
.beat .unit { margin-right: 2px; font-size: 14px; }
.tempo { width: 131px; height: 29px; margin: 9px 0 0 44px; border: 1px solid #3b3b3b; border-radius: 5px; background: #404040; color: #686868; font-size: 17px; }
.pane .scroll { width: 14px; gap: 8px; padding: 10px 0 11px; }
.pane .up { border-width: 0 5px 9px; border-bottom-color: #ccc; }
.pane .down { border-top-color: #ccc; }
.pane .drop .down { border-top-color: #777; }
.pane .track { padding: 1px; background: #262626; }
.track b { display: block; height: 84%; border-radius: 4px; background: #5c5c61; }
.dialog-foot { display: flex; justify-content: flex-end; gap: 14px; padding: 12px 36px 23px; }
.dialog-foot button { width: 131px; height: 29px; border: 1px solid #222; border-radius: 5px; background: #363636; font-size: 17px; }

/* taskbar */
.taskbar { position: relative; display: flex; height: 51px; background: linear-gradient(90deg, #2c2020, #292426 15%, #1d2326 25%, #232b23 36%, #28261e 55%, #2c211b 68%, #232c1e 80%, #21241a 92%, #2a291c); border-top: 1px solid #080808; color: #fff; }
.task { position: relative; width: 63px; height: 100%; }
.task svg { stroke: none; }
.view { margin-right: 3px; }
.view svg { stroke: #fff; fill: none; }
.open::after { content: ""; position: absolute; left: 6px; right: 5px; bottom: 0; height: 2px; background: #8fa3b2; }
.active { background: #4b4e4b; }
.active::after { left: 0; right: 0; }
.tray { display: flex; align-items: center; gap: 11px; margin-left: auto; }
.weather text { font-size: 12px; fill: #fff; }
.temp { margin-right: 26px; font-size: 18px; white-space: nowrap; }
.when { margin-left: 16px; font-size: 15px; line-height: 24px; text-align: center; }
.sogou { margin-left: 9px; }
.notes { position: relative; width: 40px; margin: 0 2px 0 11px; }
.notes em { position: absolute; left: 10px; top: 9px; width: 19px; height: 19px; border: 1px solid #888; border-radius: 50%; background: #333; font: bold 13px/17px "Noto Sans", sans-serif; text-align: center; }
.peek { width: 1px; height: 50px; margin-right: 4px; background: #888; }
.watermark { position: absolute; right: 24px; top: -9px; display: flex; justify-content: space-between; width: 220px; color: #000; font-size: 42px; font-weight: 700; line-height: 52px; pointer-events: none; }
```
